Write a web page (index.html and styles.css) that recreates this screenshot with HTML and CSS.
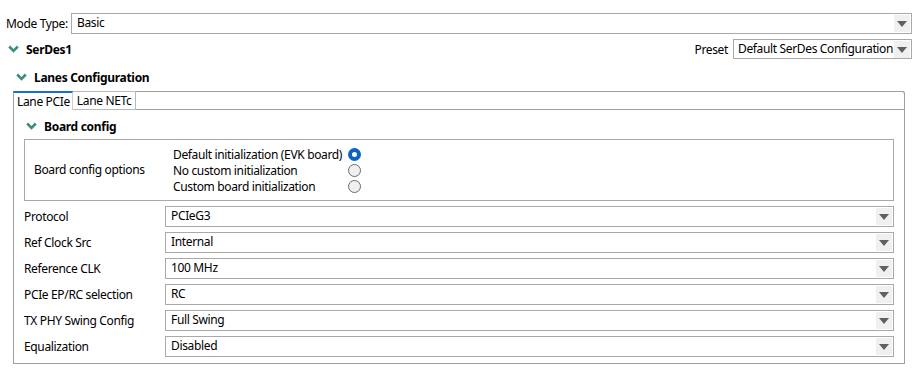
FILE: index.html
```html
<!DOCTYPE html>
<html>
<head>
<meta charset="utf-8">
<link rel="stylesheet" href="styles.css">
</head>
<body>
<div class="page">
  <div class="mode-row">
    <span class="mode-label">Mode Type:</span>
    <div class="select grow"><span class="value">Basic</span><span class="arrow"><i></i></span></div>
  </div>

  <div class="serdes-row">
    <div class="heading">
      <svg class="chev" viewBox="0 0 11 8" width="11" height="8"><path d="M1.2 1.5 L5.5 5.8 L9.8 1.5" fill="none" stroke="#3a8f80" stroke-width="2.6"/></svg>
      <span class="title">SerDes1</span>
    </div>
    <div class="preset">
      <span class="preset-label">Preset</span>
      <div class="select preset-select"><span class="value">Default SerDes Configuration</span><span class="arrow"><i></i></span></div>
    </div>
  </div>

  <div class="lanes-heading heading">
    <svg class="chev" viewBox="0 0 11 8" width="11" height="8"><path d="M1.2 1.5 L5.5 5.8 L9.8 1.5" fill="none" stroke="#3a8f80" stroke-width="2.6"/></svg>
    <span class="title">Lanes Configuration</span>
  </div>

  <div class="tabs">
    <div class="tab-strip">
      <div class="tab active">Lane PCIe</div>
      <div class="tab">Lane NETc</div>
      <div class="tab-fill"></div>
    </div>
    <div class="tab-panel">
      <div class="board-heading heading">
        <svg class="chev" viewBox="0 0 11 8" width="11" height="8"><path d="M1.2 1.5 L5.5 5.8 L9.8 1.5" fill="none" stroke="#3a8f80" stroke-width="2.6"/></svg>
        <span class="title">Board config</span>
      </div>
      <div class="group">
        <span class="group-label">Board config options</span>
        <div class="radios">
          <div class="radio-row"><span class="radio-text">Default initialization (EVK board)</span><span class="radio checked"></span></div>
          <div class="radio-row"><span class="radio-text">No custom initialization</span><span class="radio"></span></div>
          <div class="radio-row"><span class="radio-text">Custom board initialization</span><span class="radio"></span></div>
        </div>
      </div>
      <div class="fields">
        <div class="field"><span class="field-label">Protocol</span><div class="select grow"><span class="value">PCIeG3</span><span class="arrow"><i></i></span></div></div>
        <div class="field"><span class="field-label">Ref Clock Src</span><div class="select grow"><span class="value">Internal</span><span class="arrow"><i></i></span></div></div>
        <div class="field"><span class="field-label">Reference CLK</span><div class="select grow"><span class="value">100 MHz</span><span class="arrow"><i></i></span></div></div>
        <div class="field"><span class="field-label">PCIe EP/RC selection</span><div class="select grow"><span class="value">RC</span><span class="arrow"><i></i></span></div></div>
        <div class="field"><span class="field-label">TX PHY Swing Config</span><div class="select grow"><span class="value">Full Swing</span><span class="arrow"><i></i></span></div></div>
        <div class="field"><span class="field-label">Equalization</span><div class="select grow"><span class="value">Disabled</span><span class="arrow"><i></i></span></div></div>
      </div>
    </div>
  </div>
</div>
</body>
</html>
```

FILE: styles.css
```css
* { box-sizing: border-box; }
html, body { margin: 0; padding: 0; background: #ffffff; }
body {
  font-family: "Noto Sans", "Open Sans", sans-serif;
  font-size: 12px;
  letter-spacing: -0.35px;
  color: #000;
  width: 922px;
  height: 373px;
  overflow: hidden;
  white-space: nowrap;
}
.page { padding: 13px 10px 0 6px; }

.select {
  display: flex;
  align-items: center;
  height: 21px;
  border: 1px solid #a9a9a9;
  background: #fff;
  padding: 0 1px 0 5px;
}
.select .value { flex: 1; min-width: 0; line-height: 16px; padding-bottom: 1px; }
.select .arrow {
  width: 16px;
  height: 17px;
  background: #f0f0f0;
  display: flex;
  align-items: center;
  justify-content: center;
  flex: none;
}
.select .arrow i {
  width: 0; height: 0;
  border-left: 5px solid transparent;
  border-right: 5px solid transparent;
  border-top: 6px solid #606060;
  margin-top: 1px;
}
.grow { flex: 1; }

.mode-row { display: flex; align-items: center; height: 21px; }
.mode-label { width: 65px; flex: none; }

.heading { display: flex; align-items: center; }
.chev { display: block; margin-right: 7px; flex: none; }
.title { font-weight: bold; letter-spacing: -0.3px; }

.serdes-row {
  display: flex; align-items: center; justify-content: space-between;
  height: 20px; margin-top: 5px;
}
.serdes-row .heading { padding-left: 2px; }
.preset { display: flex; align-items: center; }
.preset-label { margin-right: 5px; }
.preset-select { width: 179px; height: 20px; padding-left: 4px; }

.lanes-heading { height: 20px; margin-top: 8px; padding-left: 10px; }

.tabs {
  margin-top: 4px;
  margin-left: 7px;
  margin-right: 7px;
  border: 1px solid #a0a0a0;
  border-top: none;
  border-top-right-radius: 3px;
  height: 273px;
}
.tab-strip { display: flex; height: 19px; margin-left: -1px; }
.tab {
  height: 19px;
  padding: 0 4px 0 4px;
  border: 1px solid #b9b9b9;
  border-left: none;
  display: flex; align-items: center;
  background: #fff;
}
.tab.active {
  padding: 0 2px 0 3px;
  border-top: 2px solid #1a72c8;
  border-left: 1px solid #a0a0a0;
  border-right: 1px solid #d0d0d0;
  border-bottom: none;
}
.tab-fill {
  flex: 1;
  border-top: 1px solid #a0a0a0;
  border-bottom: 1px solid #a0a0a0;
  border-right: 1px solid #a0a0a0;
  border-top-right-radius: 3px;
  margin-right: -1px;
}

.tab-panel { padding: 0 10px 0 10px; }
.board-heading { height: 20px; margin-top: 6px; padding-left: 2px; }
.group {
  margin-top: 3px;
  height: 62px;
  border: 1px solid #a9a9a9;
  display: flex; align-items: center;
  padding-left: 9px;
}
.group-label { width: 139px; padding-bottom: 1px; flex: none; }
.radios { display: flex; flex-direction: column; }
.radio-row { display: flex; align-items: center; height: 16px; }
.radio-text { width: 175px; flex: none; }
.radio {
  width: 13px; height: 13px; border-radius: 50%;
  border: 1px solid #6a6a6a;
  background: #f0f0f0;
  flex: none;
}
.radio.checked {
  border: 4px solid #0a64c0;
  background: #fff;
}

.fields { margin-top: 5px; display: flex; flex-direction: column; gap: 5px; }
.field { display: flex; align-items: center; }
.field-label { width: 141px; flex: none; }
```
